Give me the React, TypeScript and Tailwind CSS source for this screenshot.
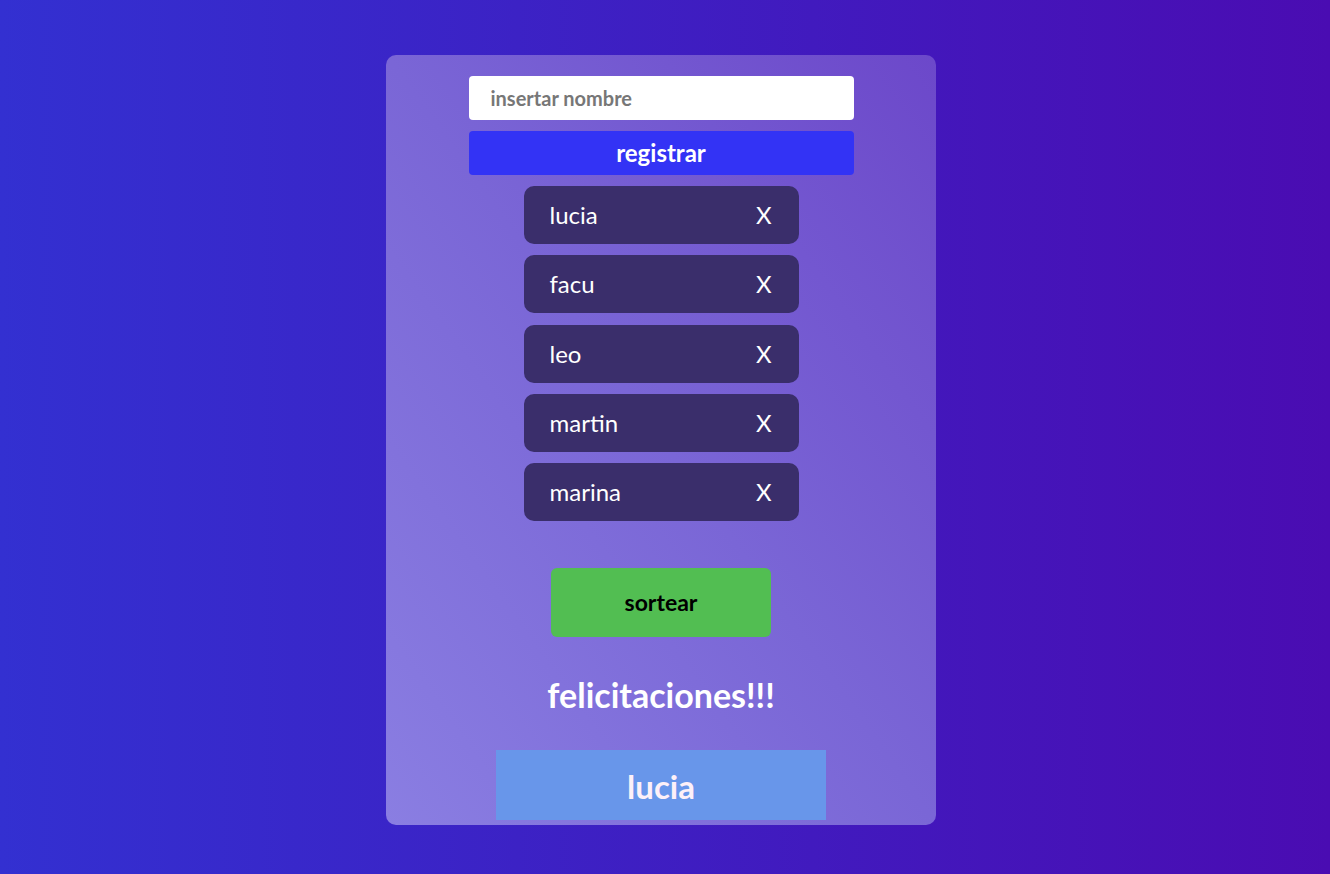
import React from "react";

const names = ["lucia", "facu", "leo", "martin", "marina"];

export default function App() {
  return (
    <div
      className="w-full min-h-screen bg-[linear-gradient(to_right,#3330d1,#4a0cb2)] flex justify-center pt-[55px] pr-[8px]"
      style={{ fontFamily: "Lato, 'Open Sans', sans-serif" }}
    >
      {/* card */}
      <div className="w-[550px] h-[770px] rounded-[10px] bg-[linear-gradient(to_top_right,#8a7ee2,#7a66d6_50%,#6c48ca)] flex flex-col items-center pt-[21px]">
        <input
          className="w-[385px] h-[44px] rounded-[4px] bg-white pl-[22px] text-[20px] font-bold text-[#333] placeholder:text-[#777] outline-none"
          placeholder="insertar nombre"
        />
        <button className="w-[385px] h-[44px] mt-[11px] rounded-[4px] bg-[#3333f5] text-white text-[24px] font-bold">
          registrar
        </button>

        {/* list */}
        <div className="flex flex-col gap-[11.25px] mt-[11px]">
          {names.map((n) => (
            <div
              key={n}
              className="w-[275px] h-[58px] rounded-[10px] bg-[#3a2e6b] flex items-center justify-between pl-[26px] pr-[27px] text-white text-[24px]"
            >
              <span>{n}</span>
              <span>X</span>
            </div>
          ))}
        </div>

        <button className="w-[220px] h-[69px] mt-[47px] rounded-[6px] bg-[#52be52] text-black text-[23px] font-bold">
          sortear
        </button>

        <div className="mt-[37px] text-white text-[34px] font-bold leading-[42px]">
          felicitaciones!!!
        </div>

        <div className="w-[330px] h-[70px] mt-[34px] bg-[#6896ea] flex items-center justify-center pt-[4px] text-[#fdf0f8] text-[33px] font-bold">
          lucia
        </div>
      </div>
    </div>
  );
}
